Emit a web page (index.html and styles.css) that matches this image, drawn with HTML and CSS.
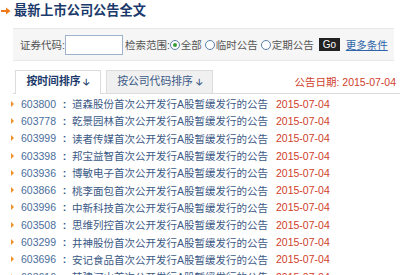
FILE: index.html
```html
<!DOCTYPE html>
<html lang="zh-CN">
<head>
  <meta charset="UTF-8">
  <title>最新上市公司公告全文</title>
  <link rel="stylesheet" href="styles.css">
</head>
<body>
  <div class="page">
    <!-- 标题 -->
    <h1 class="title">
      <svg class="title-arrow" width="10" height="8" viewBox="0 0 10 8">
        <path d="M0 3h5V0.5L9.5 4 5 7.5V5H0z" fill="#f07a1a"/>
      </svg>
      最新上市公司公告全文
    </h1>

    <!-- 检索条 -->
    <div class="search">
      <span class="label">证券代码:</span>
      <span class="input"></span>
      <span class="label">检索范围:</span>
      <span class="radio checked"></span><span class="opt">全部</span>
      <span class="radio"></span><span class="opt">临时公告</span>
      <span class="radio"></span><span class="opt">定期公告</span>
      <span class="go">Go</span>
      <a class="more" href="#">更多条件</a>
    </div>

    <!-- 排序标签 -->
    <div class="tabs">
      <div class="tab active">按时间排序 <span class="down">&#129123;</span></div>
      <div class="tab">按公司代码排序 <span class="down">&#129123;</span></div>
      <div class="date">公告日期: 2015-07-04</div>
    </div>

    <!-- 列表 -->
    <ul class="list">
      <li><span class="code">603800</span><span class="sep">:</span><a href="#">道森股份首次公开发行A股暂缓发行的公告</a><span class="d">2015-07-04</span></li>
      <li><span class="code">603778</span><span class="sep">:</span><a href="#">乾景园林首次公开发行A股暂缓发行的公告</a><span class="d">2015-07-04</span></li>
      <li><span class="code">603999</span><span class="sep">:</span><a href="#">读者传媒首次公开发行A股暂缓发行的公告</a><span class="d">2015-07-04</span></li>
      <li><span class="code">603398</span><span class="sep">:</span><a href="#">邦宝益智首次公开发行A股暂缓发行的公告</a><span class="d">2015-07-04</span></li>
      <li><span class="code">603936</span><span class="sep">:</span><a href="#">博敏电子首次公开发行A股暂缓发行的公告</a><span class="d">2015-07-04</span></li>
      <li><span class="code">603866</span><span class="sep">:</span><a href="#">桃李面包首次公开发行A股暂缓发行的公告</a><span class="d">2015-07-04</span></li>
      <li><span class="code">603996</span><span class="sep">:</span><a href="#">中新科技首次公开发行A股暂缓发行的公告</a><span class="d">2015-07-04</span></li>
      <li><span class="code">603508</span><span class="sep">:</span><a href="#">思维列控首次公开发行A股暂缓发行的公告</a><span class="d">2015-07-04</span></li>
      <li><span class="code">603299</span><span class="sep">:</span><a href="#">井神股份首次公开发行A股暂缓发行的公告</a><span class="d">2015-07-04</span></li>
      <li><span class="code">603696</span><span class="sep">:</span><a href="#">安记食品首次公开发行A股暂缓发行的公告</a><span class="d">2015-07-04</span></li>
      <li><span class="code">603616</span><span class="sep">:</span><a href="#">韩建河山首次公开发行A股暂缓发行的公告</a><span class="d">2015-07-04</span></li>
    </ul>
  </div>
</body>
</html>
```

FILE: styles.css
```css
* {
  margin: 0;
  padding: 0;
  box-sizing: border-box;
}

body {
  background: #fff;
  font-family: "Liberation Sans", "Noto Sans CJK SC", sans-serif;
  font-size: 10.5px;
  color: #555;
  overflow: hidden;
}

.page {
  width: 400px;
}

/* 标题 */
.title {
  display: flex;
  align-items: center;
  gap: 3px;
  height: 22px;
  padding-left: 1px;
  font-size: 13.2px;
  font-weight: bold;
  color: #1b3a6b;
  line-height: 22px;
}

.title-arrow {
  flex: none;
}

/* 检索条 */
.search {
  display: flex;
  align-items: center;
  height: 33px;
  margin: 6px 6px 0 13px;
  padding-left: 7px;
  background: #f6f6f6;
  border-top: 1px solid #e8e8e8;
  border-bottom: 1px solid #e8e8e8;
  color: #555;
  white-space: nowrap;
}

.search > * {
  flex: none;
}

.search .input {
  width: 58px;
  height: 20px;
  margin-right: 2px;
  background: #fff;
  border: 1px solid #9db2cc;
}

.search .radio {
  width: 10px;
  height: 10px;
  margin-right: 1px;
  border: 1px solid #5b7fa8;
  border-radius: 50%;
  background: #fff;
  position: relative;
}

.search .radio.checked::after {
  content: "";
  position: absolute;
  left: 2px;
  top: 2px;
  width: 4px;
  height: 4px;
  border-radius: 50%;
  background: #3a9a3a;
}

.search .opt {
  margin-right: 3px;
}

.go {
  margin-left: 2px;
  width: 21px;
  height: 13px;
  line-height: 13px;
  text-align: center;
  background: #222;
  color: #fff;
  font-size: 10px;
}

.more {
  margin-left: 6px;
  color: #2f64a8;
  text-decoration: underline;
}

/* 排序标签 */
.tabs {
  display: flex;
  align-items: flex-end;
  height: 24px;
  margin: 9px 0 0 13px;
  border-bottom: 1px solid #dcdcdc;
}

.tab {
  height: 23px;
  line-height: 21px;
  margin-right: 5px;
  border: 1px solid #dcdcdc;
  border-bottom: none;
  background: #f0f0f0;
  color: #3c5a86;
  text-align: center;
  font-size: 10.8px;
}

.tab:first-child {
  width: 86px;
  margin-left: 2px;
}

.tab:nth-child(2) {
  width: 107px;
}

.tab.active {
  height: 24px;
  margin-bottom: -1px;
  background: #fff;
  font-weight: bold;
  color: #1b3a6b;
}

.tab .down {
  font-size: 9px;
  font-weight: bold;
}

.date {
  margin-left: auto;
  margin-right: 4px;
  align-self: center;
  color: #d0402a;
}

/* 列表 */
.list {
  list-style: none;
  margin-top: 1px;
  padding-left: 11px;
}

.list li {
  display: flex;
  align-items: center;
  height: 17.3px;
  white-space: nowrap;
}

.list li::before {
  content: "";
  width: 0;
  height: 0;
  margin-right: 7px;
  border-left: 3px solid #f0902a;
  border-top: 3px solid transparent;
  border-bottom: 3px solid transparent;
}

.list .code {
  color: #4a6e9c;
  width: 36px;
}

.list .sep {
  width: 15px;
  text-align: center;
  color: #3c5a86;
  font-weight: bold;
}

.list a {
  color: #3c5a86;
  text-decoration: none;
  margin-right: 8px;
}

.list .d {
  color: #d0402a;
}
```
